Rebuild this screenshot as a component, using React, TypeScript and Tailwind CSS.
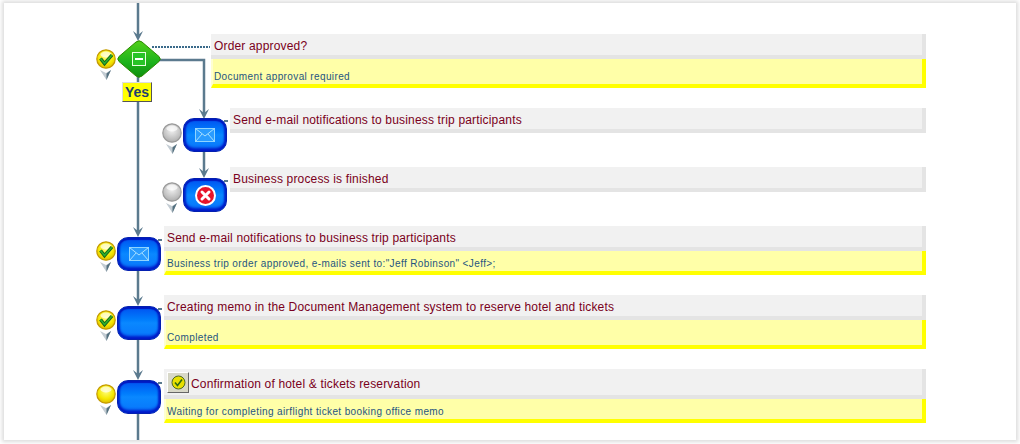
import type { ReactNode } from 'react'

type Status = 'done' | 'idle' | 'waiting'

function StatusBall({ status }: { status: Status }) {
  const fill = status === 'idle' ? 'url(#ballGray)' : 'url(#ballYellow)'
  const ring = status === 'idle' ? '#9a9a9a' : '#c49a00'
  return (
    <svg width="20" height="36" viewBox="0 0 20 36" className="shrink-0">
      <circle cx="10" cy="10" r="9.2" fill={fill} stroke={ring} strokeWidth="1.2" />
      <ellipse cx="10" cy="5.5" rx="5.5" ry="3" fill="#fff" opacity="0.65" />
      {status === 'done' && (
        <>
          <path d="M4.5 9.5 L8.5 14.5 L16 6" fill="none" stroke="#14601c" strokeWidth="3.4" />
          <path d="M4.5 9.5 L8.5 14.5 L16 6" fill="none" stroke="#2cb02c" strokeWidth="1.6" />
        </>
      )}
      <path d="M4 21 L10 24 L15 21 L10.5 31 Z" fill="#c3ccd3" />
      <path d="M15 21 L10.5 24.5 L10.5 31 Z" fill="#54707f" />
    </svg>
  )
}

function TaskNode({ children }: { children?: ReactNode }) {
  return (
    <div className="relative flex h-[34px] w-[44px] shrink-0 items-center justify-center rounded-[11px] border border-[#0420b0] bg-gradient-to-b from-[#0050f0] via-[#0a88ff] to-[#0a74fa] shadow-[inset_0_-3px_3px_#0018c8,inset_0_2px_1px_#0018c0,inset_2px_0_2px_#0030d0,inset_-2px_0_2px_#0030d0]">
      {children}
      <div className="absolute -right-[2px] top-[1px] h-[2px] w-[4px] bg-[#5b7a8e]" />
    </div>
  )
}

function MailIcon() {
  return (
    <svg width="22" height="16" viewBox="0 0 22 16">
      <rect x="1.5" y="1.5" width="19" height="13" fill="#2a9cff" stroke="#8fd4ff" strokeWidth="1" />
      <path d="M1.5 1.5 L11 9 L20.5 1.5 M1.5 14.5 L8 7 M20.5 14.5 L14 7" fill="none" stroke="#a8e0ff" strokeWidth="1" />
    </svg>
  )
}

function CancelIcon() {
  return (
    <svg width="21" height="21" viewBox="0 0 21 21">
      <circle cx="10.5" cy="10.5" r="9.5" fill="#e8152c" stroke="#fff" strokeWidth="2" />
      <path d="M7 7 L14 14 M14 7 L7 14" stroke="#fff" strokeWidth="3" strokeLinecap="round" />
    </svg>
  )
}

function Diamond() {
  return (
    <svg width="44" height="38" viewBox="0 0 44 38" className="shrink-0">
      <path d="M19 2 Q22 -0.5 25 2 L42 16.5 Q44.5 19 42 21.5 L25 36 Q22 38.5 19 36 L2 21.5 Q-0.5 19 2 16.5 Z" fill="url(#diamondGreen)" stroke="#2c8a00" />
      <rect x="15.5" y="12.5" width="13" height="13" fill="#27c427" stroke="#e8ffe0" strokeWidth="1" />
      <rect x="18" y="18" width="8" height="2" fill="#fff" />
    </svg>
  )
}

function Card({ title, note, noteTall, button }: { title: string; note?: string; noteTall?: boolean; button?: boolean }) {
  return (
    <div className="flex-1 font-['Liberation_Sans',sans-serif]">
      <div className={`flex items-center border-r-[4px] border-b-[4px] border-[#e4e4e4] bg-[#f1f1f1] pl-[3px] ${button ? 'h-[30px]' : 'h-[25px]'}`}>
        {button && (
          <div className="mr-[2px] flex h-[21px] w-[22px] items-center justify-center border border-[#666] border-t-white border-l-white bg-[#d8d8c8]">
            <svg width="15" height="15" viewBox="0 0 15 15">
              <circle cx="7.5" cy="7.5" r="6.5" fill="#e8e000" stroke="#4d6a20" />
              <path d="M4 7.5 L6.5 10.5 L11 4.5" fill="none" stroke="#2c6a10" strokeWidth="1.6" />
            </svg>
          </div>
        )}
        <span className="mt-[3px] text-[12px] leading-none tracking-[0.17px] text-[#7a0020] whitespace-nowrap">{title}</span>
      </div>
      {note !== undefined && (
        <div className={`flex items-end border-r-[4px] border-b-[4px] border-l-[2px] border-[#ffff00] border-l-[#ffffd0] bg-[#ffffa8] pl-[1px] pb-[1px] ${noteTall ? 'h-[29px]' : 'h-[24px]'}`}>
          <span className="text-[10px] leading-[12px] tracking-[0.38px] text-[#1f5580] whitespace-nowrap">{note}</span>
        </div>
      )}
    </div>
  )
}

// arrowhead with its tip at x,y in panel pixels
function Arrow({ x, y }: { x: number; y: number }) {
  return <path d={`M${x - 5} ${y - 10} L${x} ${y - 6} L${x + 5} ${y - 10} L${x} ${y} Z`} fill="#5b7a8e" />
}

export default function App() {
  return (
    <div className="h-[444px] w-[1020px] overflow-hidden bg-white pt-[3px] pl-[4px]">
      <div className="relative h-[437px] w-[1012px] bg-white shadow-[0_0_4px_2px_#dcdcdc]">
        {/* connector lines, panel origin is 4,3 */}
        <svg width="1012" height="437" className="absolute left-0 top-0">
          <defs>
            <radialGradient id="ballYellow" cx="50%" cy="35%" r="70%">
              <stop offset="0%" stopColor="#ffff80" />
              <stop offset="60%" stopColor="#f5e800" />
              <stop offset="100%" stopColor="#d8b000" />
            </radialGradient>
            <radialGradient id="ballGray" cx="50%" cy="35%" r="70%">
              <stop offset="0%" stopColor="#f2f2f2" />
              <stop offset="100%" stopColor="#a8a8a8" />
            </radialGradient>
            <linearGradient id="diamondGreen" x1="0" y1="0" x2="0" y2="1">
              <stop offset="0%" stopColor="#52d01a" />
              <stop offset="60%" stopColor="#1cb21c" />
              <stop offset="100%" stopColor="#0f8f0f" />
            </linearGradient>
          </defs>
          <g stroke="#5b7a8e" strokeWidth="2.5" fill="none">
            <path d="M134 -3 V32" />
            <path d="M134 70 V228" />
            <path d="M150 57 H200 V110" />
            <path d="M200 145 V170" />
            <path d="M134 265 V298" />
            <path d="M134 335 V372" />
            <path d="M134 409 V437" />
          </g>
          <Arrow x={134} y={38} />
          <Arrow x={200} y={116} />
          <Arrow x={200} y={175} />
          <Arrow x={134} y={234} />
          <Arrow x={134} y={303} />
          <Arrow x={134} y={377} />
          <path d="M148 44 H206" stroke="#3a6a8a" strokeWidth="2" strokeDasharray="2 1" fill="none" />
        </svg>

        <div className="relative flex h-full flex-col pr-[90px] pt-[31px]">
          {/* Order approved */}
          <div className="flex h-[74px] items-start">
            <div className="ml-[92px] mt-[15px]"><StatusBall status="done" /></div>
            <div className="ml-[1px] mt-[6px]"><Diamond /></div>
            <div className="ml-[50px] flex-1"><Card title="Order approved?" note="Document approval required" noteTall /></div>
          </div>

          <div className="flex h-[59px] items-start">
            <div className="ml-[158px] mt-[15px]"><StatusBall status="idle" /></div>
            <div className="ml-[1px] mt-[10px]"><TaskNode><MailIcon /></TaskNode></div>
            <div className="ml-[3px] flex-1"><Card title="Send e-mail notifications to business trip participants" /></div>
          </div>

          <div className="flex h-[59px] items-start">
            <div className="ml-[158px] mt-[15px]"><StatusBall status="idle" /></div>
            <div className="ml-[1px] mt-[11px]"><TaskNode><CancelIcon /></TaskNode></div>
            <div className="ml-[3px] flex-1"><Card title="Business process is finished" /></div>
          </div>

          <div className="flex h-[69px] items-start">
            <div className="ml-[92px] mt-[15px]"><StatusBall status="done" /></div>
            <div className="ml-[1px] mt-[11px]"><TaskNode><MailIcon /></TaskNode></div>
            <div className="ml-[3px] flex-1"><Card title="Send e-mail notifications to business trip participants" note="Business trip order approved, e-mails sent to:&quot;Jeff Robinson&quot; <Jeff>;" /></div>
          </div>

          <div className="flex h-[74px] items-start">
            <div className="ml-[92px] mt-[15px]"><StatusBall status="done" /></div>
            <div className="ml-[1px] mt-[11px]"><TaskNode /></div>
            <div className="ml-[3px] flex-1"><Card title="Creating memo in the Document Management system to reserve hotel and tickets" note="Completed" noteTall /></div>
          </div>

          <div className="flex items-start">
            <div className="ml-[92px] mt-[15px]"><StatusBall status="waiting" /></div>
            <div className="ml-[1px] mt-[11px]"><TaskNode /></div>
            <div className="ml-[3px] flex-1"><Card title="Confirmation of hotel & tickets reservation" note="Waiting for completing airflight ticket booking office memo" button /></div>
          </div>

          {/* Yes label on the gateway */}
          <div className="absolute left-[118px] top-[79px] flex h-[20px] w-[30px] items-center justify-center border border-[#555] border-t-[#ddd] border-l-[#ddd] bg-[#ffff00] font-['Liberation_Sans',sans-serif] text-[14px] font-bold text-[#1f3f70]">
            Yes
          </div>
        </div>
      </div>
    </div>
  )
}
